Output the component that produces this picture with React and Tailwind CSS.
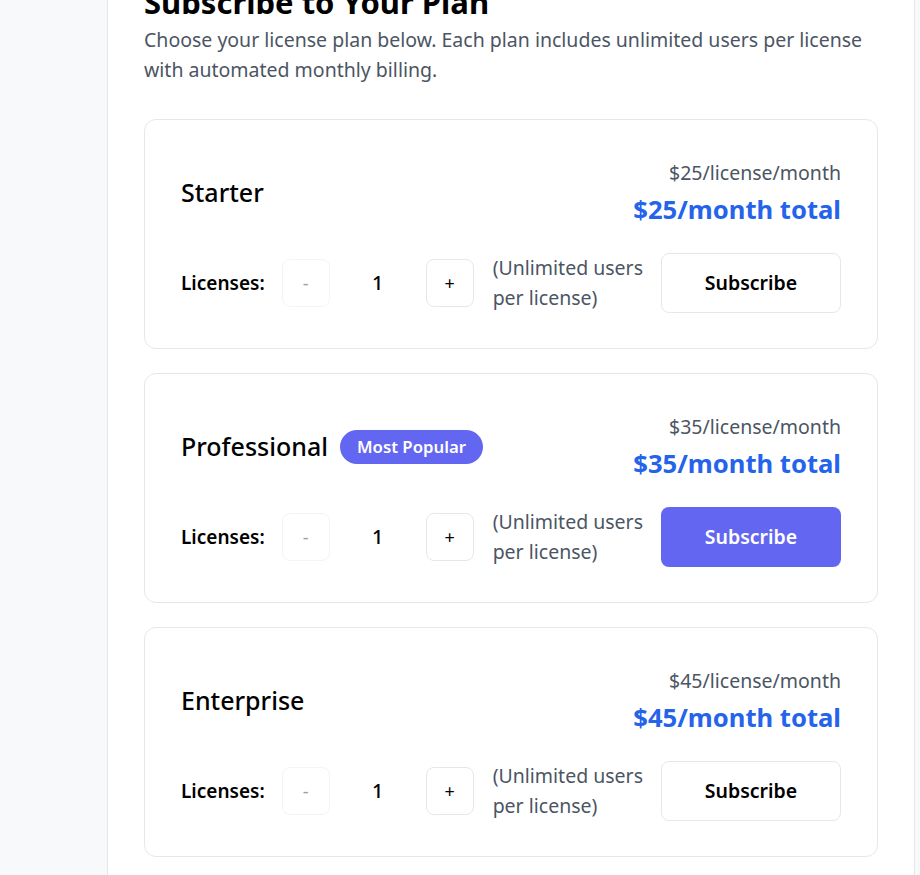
import { useState } from "react";

const PLANS = [
  { id: "starter", name: "Starter", price: 25 },
  { id: "professional", name: "Professional", price: 35, popular: true },
  { id: "enterprise", name: "Enterprise", price: 45 },
];

function PlanCard({ plan }) {
  const [count, setCount] = useState(1);

  return (
    <div className="rounded-xl border border-gray-200 bg-white px-9 pb-[35px] pt-[38px]">
      {/* Top row */}
      <div className="flex items-center justify-between">
        <div className="flex items-center gap-3">
          <h2 className="text-[25px] font-medium text-black">{plan.name}</h2>
          {plan.popular && (
            <span className="rounded-full bg-[#6366f1] px-[17px] py-1 text-[16.8px] font-semibold text-white">
              Most Popular
            </span>
          )}
        </div>
        <div className="text-right">
          <p className="text-[19.5px] leading-[30px] text-[#4b5563]">
            ${plan.price}/license/month
          </p>
          <p className="mt-1 text-[25.6px] font-bold leading-9 text-[#2563eb]">
            ${plan.price * count}/month total
          </p>
        </div>
      </div>

      {/* Bottom row */}
      <div className="mt-[25px] flex items-center gap-4">
        <span className="mr-px text-[19px] font-semibold text-black">Licenses:</span>
        <button
          onClick={() => setCount(Math.max(1, count - 1))}
          disabled={count <= 1}
          className="flex h-12 w-12 items-center justify-center rounded-lg border border-gray-100 text-lg text-gray-400"
        >
          -
        </button>
        <span className="w-16 text-center text-xl font-medium text-black">
          {count}
        </span>
        <button
          onClick={() => setCount(count + 1)}
          className="flex h-12 w-12 items-center justify-center rounded-lg border border-gray-200 text-lg text-black"
        >
          +
        </button>
        <p className="flex-1 pl-[3px] text-[19.5px] leading-[30px] text-[#4b5563]">
          (Unlimited users per license)
        </p>
        <button
          className={
            plan.popular
              ? "h-[60px] w-[180px] rounded-lg bg-[#6366f1] text-[19.5px] font-semibold text-white"
              : "h-[60px] w-[180px] rounded-lg border border-gray-200 bg-white text-[19.5px] font-semibold text-black"
          }
        >
          Subscribe
        </button>
      </div>
    </div>
  );
}

export default function App() {
  return (
    <div
      className="flex min-h-screen overflow-hidden bg-[#f8f9fb]"
      style={{ fontFamily: '"Noto Sans", "Open Sans", sans-serif' }}
    >
      <div className="w-[107px] shrink-0" />
      <main className="w-[808px] shrink-0 border-x border-gray-200 bg-white px-9 pb-6">
        <div className="-mt-[16px]">
          <h1 className="text-[31px] font-bold leading-9 text-black">
            Subscribe to Your Plan
          </h1>
          <p className="mt-[5px] text-[19.5px] leading-[30px] text-[#4b5563]">
            Choose your license plan below. Each plan includes unlimited users
            per license with automated monthly billing.
          </p>

          <div className="mt-[34px] flex flex-col gap-6">
            {PLANS.map((plan) => (
              <PlanCard key={plan.id} plan={plan} />
            ))}
          </div>
        </div>
      </main>
    </div>
  );
}
